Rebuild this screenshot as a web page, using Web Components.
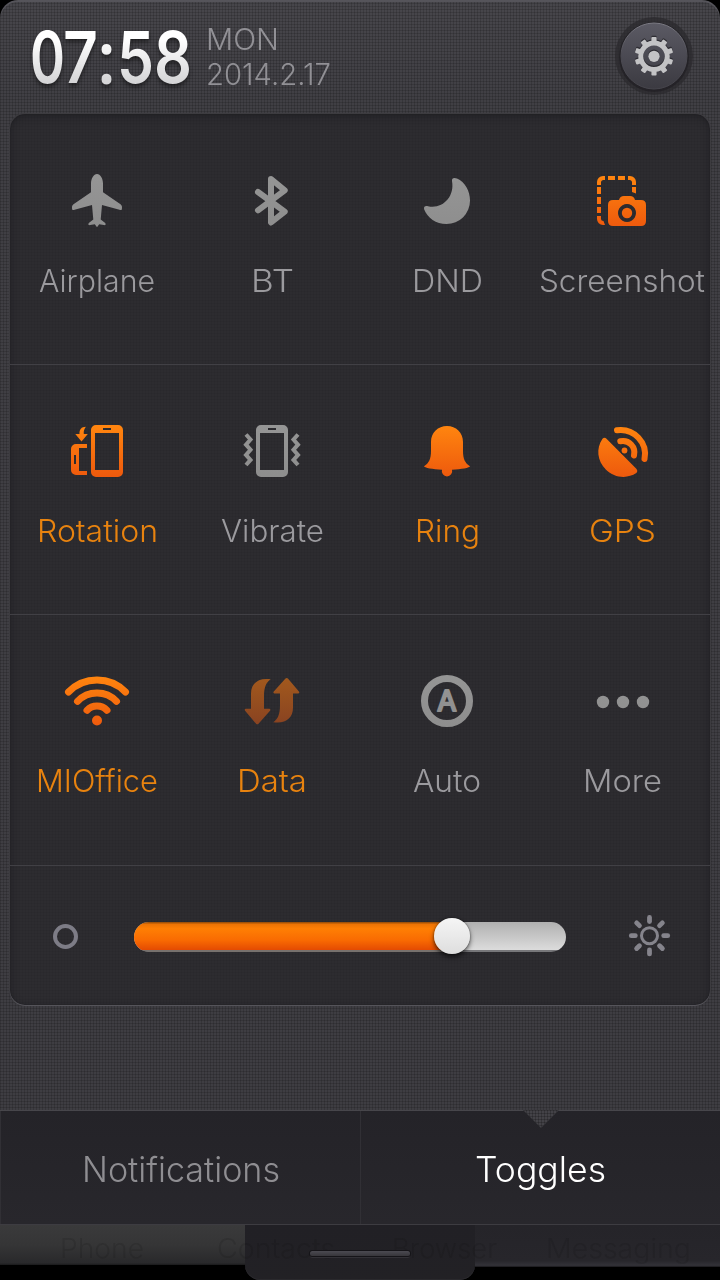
<!DOCTYPE html>
<html lang="en"><head><meta charset="utf-8"><title>Toggles</title>
<style>
html,body{margin:0;background:#000;width:720px;height:1280px;overflow:hidden}
body{font-family:Inter,Roboto,"Liberation Sans",sans-serif;font-weight:320}
</style></head><body>
<toggle-shade></toggle-shade>
<script>
const define=(name,html,init)=>{
  const t=document.createElement('template');t.innerHTML=html;
  customElements.define(name,class extends HTMLElement{
    constructor(){super();this.attachShadow({mode:'open'}).appendChild(t.content.cloneNode(true));}
    connectedCallback(){if(init)init.call(this,this.shadowRoot);}
  });
};

/* Label that is stretched to fill a given width */
define('fit-label',`<style>:host{display:block;white-space:nowrap;font-kerning:normal;font-variant-ligatures:none}span{display:inline-block;transform-origin:0 50%}</style><span><slot></slot></span>`,function(r){
  const s=r.querySelector('span'),w=+this.getAttribute('w');
  if(!w)return;
  const n=s.getBoundingClientRect().width;
  this.style.width=w+'px';
  s.style.transform=`scaleX(${w/n})`;
});

const phone=(x)=>`<path fill-rule="evenodd" d="M${x+5} 425h22a5 5 0 0 1 5 5v42a5 5 0 0 1-5 5h-22a5 5 0 0 1-5-5v-42a5 5 0 0 1 5-5zM${x+4} 433v37h24v-37zM${x+12} 428v2h8v-2z"/>`;
const zig='M246 434.500l4.500 5-4.500 5.200 4.500 5-4.500 5.200 4.500 5-4.500 5.100';
const icons={
airplane:[97,201,`<path d="M97 174c3.300 0 6 4.500 6 9.500v8.700l17.500 12c1.500 1 1.800 2.800 1.300 5.300-.5.700-1.300.700-2.300.3l-17.500-4.800-1.300 14.500 4.500 3.500c1 1.500.3 2.500-1.300 2.100l-4.700-.8-2.200 3-2.200-3-4.700.8c-1.600.4-2.300-.6-1.300-2.100l4.500-3.500-1.300-14.500-17.500 4.800c-1 .4-1.800.4-2.300-.3-.5-2.500-.2-4.300 1.300-5.300l17.500-12v-8.700c0-5 2.700-9.500 6-9.500z"/>`],
bt:[272,201,`<path fill="none" stroke="url(#g)" stroke-width="6" stroke-linecap="round" stroke-linejoin="round" d="M258 192l26.700 19.700L271 222.500V179l13.700 11.300L258 210.300"/>`],
dnd:[447,201,`<path d="M457 178.500C465 182 470 191 470 200.500A23.400 23.400 0 0 1 446.500 224C436 224 427.500 218 424.200 209.500C423.300 206.500 425.500 205.500 428 206.200C442 209.500 455 197 452 181C451.600 178 454 177.200 457 178.500Z"/>`],
shot:[622,201,`<path d="M597 185v-3a6 6 0 0 1 6-6h2v4h-1.500q-2.500 0-2.500 2.500v2.500zM608 176h7v4h-7zM618 176h7v4h-7zM628 176h2a6 6 0 0 1 6 6v3h-4v-2.500q0-2.500-2.500-2.500h-1.500zM632 187h4v6.500l-4-1.500zM597 187h4v7h-4zM597 197h4v7h-4zM597 207h4v6h-4zM597 216h4v2.500q0 2.500 2.500 2.500l1.500 4h-2a6 6 0 0 1-6-6z"/><path fill-rule="evenodd" d="M613 200h6q1-4 5-4h6q4 0 5 4h6q5 0 5 5v16q0 5-5 5h-28q-5 0-5-5v-16q0-5 5-5zM627 204a9 9 0 1 0 .01 0z"/><circle cx="627" cy="213" r="5.200"/>`],
rotation:[97,451,phone(91)+`<path fill-rule="evenodd" d="M76 444h11v4h-8v23h8v4h-11a5 5 0 0 1-5-5v-21a5 5 0 0 1 5-5zM74 455v9h2v-9z"/><path d="M75.300 434h4.200c-.3-4.500 2-7.300 6.400-7.300-1.800 2.500-2.400 4.300-2.100 7.300h4l-6.300 7.500z"/>`],
vibrate:[272,451,phone(256)+`<g fill="none" stroke="url(#g)" stroke-width="4"><path d="${zig}"/><path transform="translate(544 0) scale(-1 1)" d="${zig}"/></g>`],
ring:[447,451,`<path d="M447 426c9 0 16 6.500 16 16v9c0 8 2 12 7 15.300 0 1.500-9 3-18 3.500a5.200 5.200 0 1 1-10 0c-9-.5-18-2-18-3.500 5-3.300 7-7.300 7-15.300v-9c0-9.500 7-16 16-16z"/>`],
gps:[622,451,`<path d="M602.500 438.800q2-2 4 0l29.800 30q2 2.500 0 4.300c-9 6-22 5-30.500-3.600-8.500-8.500-10-21-3.300-30.700z"/><circle cx="624.500" cy="450.500" r="4" fill="#2b2a2e"/><circle cx="624.500" cy="450.500" r="2.900"/><g fill="none" stroke="url(#g)" stroke-width="6" stroke-linecap="round"><path d="M617 430.300C634 428 648 443 644.500 459"/><path d="M620.300 441.300C629 439.500 636 447 634 455.500"/></g>`],
wifi:[97,701,`<circle cx="97" cy="720.500" r="5"/><g fill="none" stroke="url(#g)" stroke-width="7" stroke-linecap="round"><path d="M68.500 692a40 40 0 0 1 57 0M77.500 701.300a27 27 0 0 1 39 0M87 710.300a13.700 13.700 0 0 1 20 0"/></g>`],
data:[272,701,`<path d="M270.700 679.300c-4.500 3-6.700 8-6.700 17v12.500h5.500q1.500.5.500 2l-11.500 13q-1.200 1-2.400 0l-11-13q-1-1.500.5-2h5.400v-15c0-11 8-16.500 19.700-14.500zM273.300 722.200c4.500-3 6.700-8 6.700-17V693.500h-5.700q-1.500-.5-.5-2l11.700-13q1.200-1 2.400 0l11 13q1 1.500-.5 2H293v14c0 11-8 16.700-19.700 14.700z"/>`],
auto:[447,701,`<circle cx="447" cy="701" r="22.500" fill="none" stroke="url(#g)" stroke-width="7"/><text x="447" y="710.500" text-anchor="middle" font-family="Inter,sans-serif" font-weight="400" font-size="28" stroke="url(#g)" stroke-width="2.200" stroke-linejoin="round">A</text>`],
more:[622,701,`<circle cx="603" cy="702" r="6.200"/><circle cx="623" cy="702" r="6.200"/><circle cx="643" cy="702" r="6.200"/>`]
};
define('toggle-tile',`<style>
:host{display:flex;flex-direction:column;align-items:center;width:175px;padding-top:51px;box-sizing:border-box;color:#9b9a9e}
:host([on]){color:#e8830f}
svg{width:72px;height:72px;margin-left:-1px;display:block}
fit-label{margin:23px 1px 0 0;line-height:41px;font-size:31px}
</style><div class="icon"></div><fit-label></fit-label>`,function(r){
  const [cx,cy,body]=icons[this.getAttribute('icon')];
  const tone=this.getAttribute('tone');
  const [a,b]=tone==='hot'?['#ff850f','#ee5a0d']:tone==='dim'?['#a35a1d','#884221']:['#959595','#8e8e8e'];
  r.querySelector('.icon').innerHTML=`<svg viewBox="${cx-36} ${cy-36} 72 72" fill="url(#g)"><defs><linearGradient id="g" gradientUnits="userSpaceOnUse" x1="0" x2="0" y1="${cy-25}" y2="${cy+25}"><stop stop-color="${a}"/><stop offset="1" stop-color="${b}"/></linearGradient></defs>${body}</svg>`;
  const old=r.querySelector('fit-label'),l=document.createElement('fit-label');
  l.textContent=this.getAttribute('label');l.setAttribute('w',this.getAttribute('w'));
  old.replaceWith(l);
});

define('toggle-row',`<style>:host{display:flex;height:250px;box-sizing:border-box}:host([ruled]){background:linear-gradient(#414045,#414045) 0 0/100% 1px no-repeat}</style><slot></slot>`);

define('shade-clock',`<style>
:host{display:flex;height:60px;filter:drop-shadow(0 3px 2px rgba(0,0,0,.45))}
span{display:block;font:600 72px/60px Inter,sans-serif;background:linear-gradient(#fff 20%,#d6d6d8 90%);-webkit-background-clip:text;background-clip:text;color:transparent;transform-origin:0 50%;white-space:pre}
div{height:60px}
.colon{font:600 72px/58px "Open Sans",sans-serif}
.colon span{font:inherit}
</style><div style="width:33px"><span>0</span></div><div style="width:34px"><span>7</span></div><div class="colon" style="width:20px"><span>:</span></div><div style="width:37px"><span>5</span></div><div style="width:33px"><span>8</span></div>`,function(r){
  /* glyph widths of the clock face */
  const w=[35,35,19,37,38];
  r.querySelectorAll('span').forEach((s,i)=>{
    s.style.display='inline-block';
    s.style.transform=`translateX(-2px) scaleX(${w[i]/s.getBoundingClientRect().width})`;
  });
});

define('settings-button',`<style>:host{display:block;width:78px;height:78px}svg{display:block}</style>
<svg width="78" height="78" viewBox="615.500 17 78 78"><defs><linearGradient id="b" x2="0" y2="1"><stop stop-color="#5b5a64"/><stop offset="1" stop-color="#3b3a41"/></linearGradient><linearGradient id="r" x2="0" y2="1"><stop stop-color="#7c7b84"/><stop offset=".5" stop-color="#4b4a52"/><stop offset="1" stop-color="#45444b"/></linearGradient></defs>
<circle cx="654.500" cy="56" r="39" fill="#2b2a2e" opacity=".75"/><circle cx="654.500" cy="57" r="35" fill="#1e1d21" opacity=".6"/>
<circle cx="654.500" cy="56" r="33" fill="url(#b)" stroke="url(#r)"/>
<g id="gear"><g transform="translate(654.500 55)" fill="#2e2d33" class="s"></g><g transform="translate(654.500 56.300)" fill="#c3c3c5" class="f"></g></g></svg>`,function(r){
  let g='<path fill-rule="evenodd" d="M0-15.800a15.800 15.800 0 1 0 .01 0zM0-10.800a10.800 10.800 0 1 1-.01 0z"/><circle r="5.600"/>';
  for(let i=0;i<10;i++)g+=`<rect x="-2.600" y="-19.300" width="5.200" height="6" rx="1" transform="rotate(${i*36})"/>`;
  r.querySelector('.s').innerHTML=g;r.querySelector('.f').innerHTML=g;
});

define('brightness-slider',`<style>
:host{display:flex;height:141px;align-items:center;box-sizing:border-box;padding:3px 39px 0 42px;background:linear-gradient(#414045,#414045) 0 0/100% 1px no-repeat}
.track{flex:none;width:432px;height:30px;margin:0 61px 0 55px;border-radius:15px;background:linear-gradient(#b0b0b0,#dcdcdc 94%,#77777a 94%);position:relative}
.fill{width:318px;height:30px;border-radius:15px 0 0 15px;background:linear-gradient(#8f4a08,#ee7404 8%,#ff7f04 22%,#f96b02 60%,#e44b02 93%,#77716d 94%)}
.thumb{position:absolute;left:300px;top:-4px;width:36px;height:36px;border-radius:50%;background:linear-gradient(#f5f5f5,#dedede);box-shadow:0 3px 5px rgba(0,0,0,.6),0 0 2px rgba(0,0,0,.5)}
svg{display:block;flex:none}
</style><svg width="27" height="28" viewBox="52 923 27 28"><circle cx="65.500" cy="936.500" r="10.500" fill="none" stroke="#7d7c86" stroke-width="4"/></svg>
<div class="track"><div class="fill"></div><div class="thumb"></div></div>
<svg width="44" height="44" viewBox="627 915 44 44"><g class="sun" fill="none" stroke="#85848c"><circle cx="649.500" cy="935.700" r="8" stroke-width="3"/></g></svg>`,function(r){
  let s='';for(let i=0;i<8;i++)s+=`<path d="M649.500 917.500v4" transform="rotate(${i*45} 649.500 935.700)" stroke-width="4.800" stroke-linecap="round"/>`;
  r.querySelector('.sun').insertAdjacentHTML('beforeend',s);
});

define('shade-tab',`<style>
:host{display:flex;justify-content:center;width:360px;height:113px;line-height:116px;font-size:35px;color:#8f8e92;position:relative;box-sizing:border-box;border-left:1px solid #313035}
:host([active]){color:#fff}
.notch{display:none;position:absolute;left:162px;top:-1px;width:36px;height:18px;clip-path:polygon(0 0,100% 0,50% 100%);background:repeating-linear-gradient(90deg,#0003 0 1px,#0000 1px 3px),repeating-linear-gradient(#0003 0 1px,#0000 1px 3px),#434247}
:host([active]) .notch{display:block}
</style><div class="notch"></div><slot></slot>`);

define('shade-footer',`<style>
:host{display:grid;grid-template-columns:245px 230px 245px;height:55px;background:#000;position:relative}
.l{height:40px;background:linear-gradient(#3a3a3b,#353536 50%,#29292b 95%,#1a1a1b)}
.r{height:42px;background:linear-gradient(#252429,#27262b 85%,#333238 96%,#18171a)}
.h{height:55px;background:linear-gradient(#212025,#222125);border-radius:0 0 15px 15px;box-shadow:inset 0 -1px #2a292d;display:flex;justify-content:center;box-sizing:border-box;padding-top:26px}
.bar{width:100px;height:5px;border-radius:3px;background:linear-gradient(#4b4a51,#37363b);box-shadow:0 0 0 1px #151418,0 2px #323136;position:relative;z-index:1}
.names{position:absolute;inset:0;display:grid;grid-template-columns:60px 157px 175px 154px 174px;font-size:27px;line-height:47px;color:rgba(15,15,17,.14)}
</style><div class="l"></div><div class="h"><div class="bar"></div></div><div class="r"></div>
<div class="names"><i></i><fit-label w="84">Phone</fit-label><fit-label w="118">Contacts</fit-label><fit-label w="105">Browser</fit-label><fit-label w="145">Messaging</fit-label></div>`);

define('toggle-shade',`<style>
:host{display:flex;flex-direction:column;width:720px;height:1280px;
 --mesh:repeating-linear-gradient(90deg,rgba(0,0,0,.15) 0 1px,transparent 1px 3px),repeating-linear-gradient(rgba(0,0,0,.15) 0 1px,transparent 1px 3px)}
.top{height:1110px;box-sizing:border-box;border-radius:18px 18px 0 0;background:var(--mesh),linear-gradient(#47464b,#403f44 100px,#3e3d42);box-shadow:inset 0 2px #55545a}
header{display:flex;height:114px;box-sizing:border-box;padding:17px 27px 0 32px}
.date{margin:5px 0 0 17px;font-size:29.500px;line-height:35px;color:#919095;flex:1}
.panel{width:700px;height:891px;margin:0 10px;border-radius:15px;box-sizing:border-box;
 background:repeating-linear-gradient(90deg,rgba(0,0,0,.05) 0 1px,transparent 1px 3px),repeating-linear-gradient(rgba(0,0,0,.05) 0 1px,transparent 1px 3px),#2d2c30;
 box-shadow:inset 0 2px 7px rgba(20,19,23,.5),inset 0 0 0 1px #29282c,0 1px #55545a,0 0 0 1px #3d3c40}
.tabs{display:flex;height:115px;box-sizing:border-box;background:linear-gradient(#242328,#28272c);border-top:1px solid #47464b;border-bottom:1px solid #3d3c41}
</style>
<div class="top"><header><shade-clock style="margin-top:10px"></shade-clock>
<div class="date"><fit-label w="73">MON</fit-label><fit-label w="125">2014.2.17</fit-label></div><settings-button></settings-button></header>
<div class="panel">
<toggle-row><toggle-tile icon="airplane" label="Airplane" w="116"></toggle-tile><toggle-tile icon="bt" label="BT" w="43"></toggle-tile><toggle-tile icon="dnd" label="DND" w="71"></toggle-tile><toggle-tile icon="shot" tone="hot" label="Screenshot" w="166"></toggle-tile></toggle-row>
<toggle-row ruled><toggle-tile icon="rotation" on tone="hot" label="Rotation" w="121"></toggle-tile><toggle-tile icon="vibrate" label="Vibrate" w="103"></toggle-tile><toggle-tile icon="ring" on tone="hot" label="Ring" w="65"></toggle-tile><toggle-tile icon="gps" on tone="hot" label="GPS" w="67"></toggle-tile></toggle-row>
<toggle-row ruled style="height:251px"><toggle-tile icon="wifi" on tone="hot" label="MIOffice" w="122"></toggle-tile><toggle-tile icon="data" on tone="dim" label="Data" w="70"></toggle-tile><toggle-tile icon="auto" label="Auto" w="68"></toggle-tile><toggle-tile icon="more" label="More" w="79"></toggle-tile></toggle-row>
<brightness-slider></brightness-slider>
</div></div>
<div class="tabs"><shade-tab><fit-label w="198">Notifications</fit-label></shade-tab><shade-tab active><fit-label w="131">Toggles</fit-label></shade-tab></div>
<shade-footer></shade-footer>`);
</script></body></html>
